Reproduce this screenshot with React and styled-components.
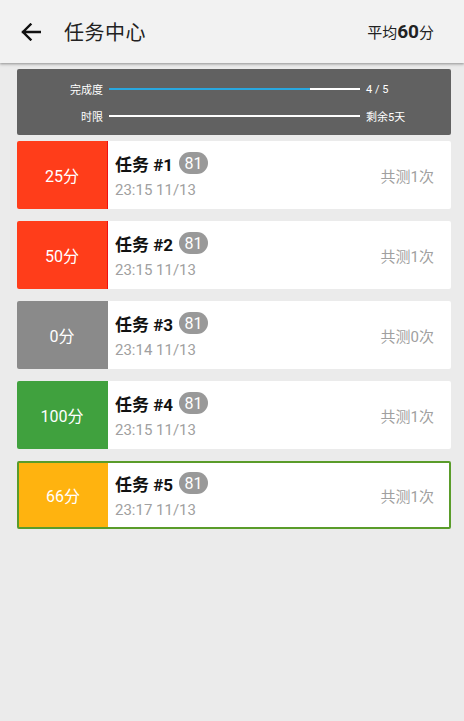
import React from "react";
import styled, { createGlobalStyle } from "styled-components";

const Global = createGlobalStyle`
  html, body { margin: 0; padding: 0; background: #ebebeb; }
  body { font-family: Roboto, "Noto Sans CJK SC", sans-serif; }
  * { box-sizing: border-box; }
`;

const Page = styled.div`
  width: 464px;
  min-height: 721px;
  background: #ebebeb;
`;

const Header = styled.header`
  height: 63px;
  background: #f2f2f2;
  display: flex;
  align-items: center;
  padding: 0 30px 0 20px;
  box-shadow: 0 1px 2px rgba(0,0,0,0.25), 0 2px 3px rgba(0,0,0,0.12);
  position: relative;
  z-index: 1;
`;

const BackBtn = styled.div`
  width: 22px;
  height: 22px;
  display: flex;
  align-items: center;
  justify-content: center;
  margin-right: 22px;
`;

const Title = styled.h1`
  margin: 0;
  flex: 1;
  font-size: 20px;
  font-weight: 400;
  color: #222;
  letter-spacing: 0.5px;
`;

const Avg = styled.div`
  font-size: 15px;
  color: #222;
  display: flex;
  align-items: baseline;
  b { font-size: 19px; font-weight: 700; }
`;

const Content = styled.main`
  padding: 6px 13px 0 17px;
  display: flex;
  flex-direction: column;
  gap: 12px;
`;

const Stats = styled.section`
  background: #616161;
  border-radius: 2px;
  height: 66px;
  margin-bottom: -6px;
  display: flex;
  flex-direction: column;
  justify-content: center;
  gap: 12px;
`;

const StatRow = styled.div`
  display: grid;
  grid-template-columns: 86px 251px auto;
  align-items: center;
  column-gap: 6px;
  height: 15px;
`;

const StatLabel = styled.span`
  text-align: right;
  font-size: 11px;
  color: #fff;
`;

const Track = styled.div`
  height: 2px;
  background: #fff;
`;

const Fill = styled.div`
  height: 100%;
  background: #29a8e0;
`;

const StatValue = styled.span`
  font-size: 11px;
  color: #fff;
`;

const Card = styled.div`
  height: 68px;
  background: #fff;
  border-radius: 2px;
  display: flex;
  overflow: hidden;
  border: ${p => (p.$active ? "2px solid #5a9c2a" : "none")};
`;

const Score = styled.div`
  width: ${p => (p.$active ? "89px" : "91px")};
  background: ${p => p.$color};
  border-right: 1px solid ${p => p.$edge || p.$color};
  color: #fff;
  font-size: 16px;
  display: flex;
  align-items: center;
  justify-content: center;
  flex-shrink: 0;
`;

const Info = styled.div`
  flex: 1;
  display: flex;
  flex-direction: column;
  justify-content: center;
  padding-left: 7px;
  gap: 6px;
`;

const TaskName = styled.div`
  display: flex;
  align-items: center;
  font-size: 17px;
  font-weight: 700;
  color: #111;
  height: 24px;
`;

const Badge = styled.span`
  margin-left: 6px;
  height: 22px;
  min-width: 29px;
  padding: 0 5px;
  border-radius: 11px;
  background: #999;
  color: #fff;
  font-size: 16px;
  font-weight: 400;
  display: inline-flex;
  align-items: center;
  justify-content: center;
`;

const Time = styled.div`
  font-size: 15px;
  line-height: 18px;
  color: #a0a0a0;
`;

const Count = styled.div`
  align-self: center;
  padding-right: ${p => (p.$active ? "15px" : "17px")};
  font-size: 15px;
  color: #a0a0a0;
`;

const tasks = [
  { n: 1, score: 25, color: "#ff3d1a", edge: "#f01010", time: "23:15 11/13", count: 1 },
  { n: 2, score: 50, color: "#ff3d1a", edge: "#f01010", time: "23:15 11/13", count: 1 },
  { n: 3, score: 0, color: "#8a8a8a", time: "23:14 11/13", count: 0 },
  { n: 4, score: 100, color: "#40a13e", time: "23:15 11/13", count: 1 },
  { n: 5, score: 66, color: "#ffb30f", time: "23:17 11/13", count: 1, active: true },
];

export default function App() {
  return (
    <Page>
      <Global />
      <Header>
        <BackBtn>
          <svg width="20" height="18" viewBox="0 0 20 18" fill="none">
            <path d="M19 9H2M9.5 1.5L2 9l7.5 7.5" stroke="#111" strokeWidth="2.4" strokeLinecap="square" />
          </svg>
        </BackBtn>
        <Title>任务中心</Title>
        <Avg>平均<b>60</b>分</Avg>
      </Header>
      <Content>
        <Stats>
          <StatRow>
            <StatLabel>完成度</StatLabel>
            <Track><Fill style={{ width: "80%" }} /></Track>
            <StatValue>4 / 5</StatValue>
          </StatRow>
          <StatRow>
            <StatLabel>时限</StatLabel>
            <Track />
            <StatValue>剩余5天</StatValue>
          </StatRow>
        </Stats>
        {tasks.map(t => (
          <Card key={t.n} $active={t.active}>
            <Score $color={t.color} $edge={t.edge} $active={t.active}>{t.score}分</Score>
            <Info>
              <TaskName>任务 #{t.n}<Badge>81</Badge></TaskName>
              <Time>{t.time}</Time>
            </Info>
            <Count $active={t.active}>共测{t.count}次</Count>
          </Card>
        ))}
      </Content>
    </Page>
  );
}
